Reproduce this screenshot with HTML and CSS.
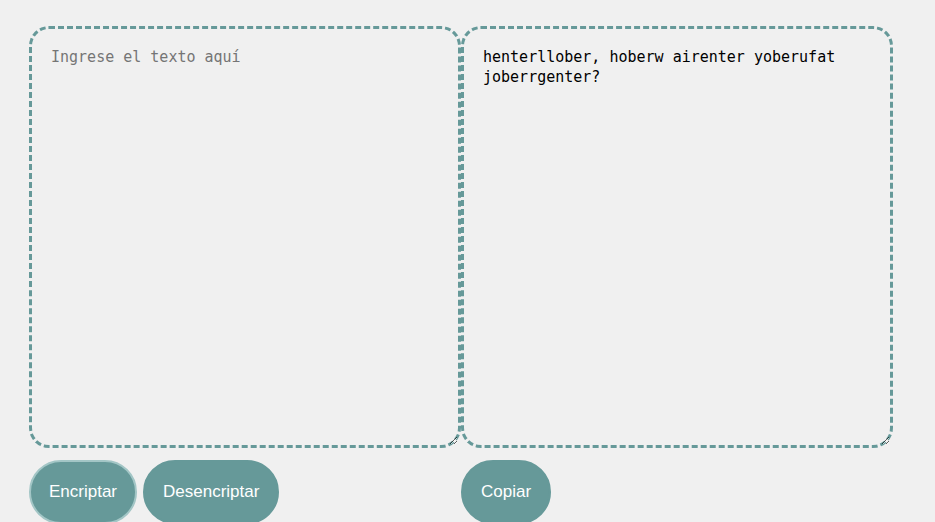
FILE: index.html
```html
<!DOCTYPE html>
<html lang="es">
<head>
  <meta charset="UTF-8">
  <title>Encriptador</title>
  <link rel="stylesheet" href="styles.css">
</head>
<body>

  <main class="app">
    <div class="panel">
      <textarea id="entrada" class="caja" placeholder="Ingrese el texto aquí"></textarea>
      <div class="acciones">
        <button class="btn btn-activo" onclick="encriptar()">Encriptar</button>
        <button class="btn" onclick="desencriptar()">Desencriptar</button>
      </div>
    </div>

    <div class="panel">
      <textarea id="salida" class="caja" readonly>henterllober, hoberw airenter yoberufat joberrgenter?</textarea>
      <div class="acciones">
        <button class="btn" onclick="copiar()">Copiar</button>
      </div>
    </div>
  </main>

  <script>
    const llaves = [["e", "enter"], ["i", "imes"], ["a", "ai"], ["o", "ober"], ["u", "ufat"]];

    function encriptar() {
      let texto = document.getElementById('entrada').value;
      llaves.forEach(([letra, clave]) => {
        texto = texto.split(letra).join('\u0000' + letra);
      });
      llaves.forEach(([letra, clave]) => {
        texto = texto.split('\u0000' + letra).join(clave);
      });
      document.getElementById('salida').value = texto;
    }

    function desencriptar() {
      let texto = document.getElementById('entrada').value;
      llaves.slice().reverse().forEach(([letra, clave]) => {
        texto = texto.split(clave).join(letra);
      });
      document.getElementById('salida').value = texto;
    }

    function copiar() {
      const salida = document.getElementById('salida');
      salida.select();
      document.execCommand('copy');
    }
  </script>

</body>
</html>
```

FILE: styles.css
```css
body {
  margin: 0;
  background-color: #f0f0f0;
  font-family: "Liberation Sans", Arial, sans-serif;
}

.app {
  display: flex;
  padding: 26px 0 0 29px;
}

.panel {
  display: flex;
  flex-direction: column;
  width: 432px;
}

.caja {
  box-sizing: border-box;
  width: 432px;
  height: 422px;
  padding: 18px 19px;
  border: 3px dashed #669999;
  border-radius: 20px;
  background: transparent;
  font-family: "DejaVu Sans Mono", "Liberation Mono", monospace;
  font-size: 15px;
  line-height: 20px;
  color: #000;
  outline: none;
}

.caja::placeholder {
  color: #757575;
}

.acciones {
  display: flex;
  gap: 6px;
  margin-top: 12px;
}

.btn {
  padding: 20px 18px;
  border: 2px solid #669999;
  border-radius: 40px;
  background-color: #669999;
  color: white;
  font-family: "Liberation Sans", Arial, sans-serif;
  font-size: 17px;
  cursor: pointer;
}

.btn-activo {
  border-color: #a3c6c6;
}

.btn:hover {
  opacity: 0.9;
}
```
